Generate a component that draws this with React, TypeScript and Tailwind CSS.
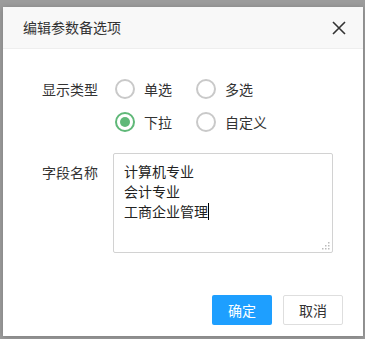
import React from "react";

const font = { fontFamily: '"Noto Sans CJK SC", "Noto Sans", sans-serif' };

type RadioProps = {
  label: string;
  checked?: boolean;
  className?: string;
};

const Radio = ({ label, checked, className }: RadioProps) => {
  return (
    <div className={`${className} flex items-center h-[20px]`}>
      {checked ? (
        <span className="w-[20px] h-[20px] rounded-full border-2 border-[#5fb878] flex items-center justify-center">
          <span className="w-[10px] h-[10px] rounded-full bg-[#5fb878]"></span>
        </span>
      ) : (
        <span className="w-[20px] h-[20px] rounded-full border-2 border-[#c9c9c9]"></span>
      )}
      <span className="ml-[9px] text-[14px] text-[#333]">{label}</span>
    </div>
  );
};

const App = () => {
  return (
    <div
      className="w-[365px] h-[339px] bg-[#9c9c9c] pt-[7px] pl-[3px] overflow-hidden"
      style={font}
    >
      <div className="w-[360px] h-[329px] bg-white flex flex-col shadow-[0_1px_6px_rgba(0,0,0,0.2)]">
        {/* title */}
        <div className="h-[42px] shrink-0 bg-[#f8f8f8] border-b border-[#eee] flex items-center justify-between pl-[20px] pr-[16px]">
          <span className="text-[14px] text-[#333]">编辑参数备选项</span>
          <svg width="14" height="14" viewBox="0 0 14 14" className="mr-[1px]">
            <path d="M1 1 L13 13 M13 1 L1 13" stroke="#333" strokeWidth="1.6" />
          </svg>
        </div>

        {/* body */}
        <div className="flex-1 pt-[30px]">
          <div className="flex">
            <div className="w-[95px] text-right text-[14px] text-[#333] leading-[20px]">
              显示类型
            </div>
            <div className="ml-[17px] grid grid-cols-[81px_auto] gap-y-[13px]">
              <Radio label="单选" />
              <Radio label="多选" />
              <Radio label="下拉" checked />
              <Radio label="自定义" />
            </div>
          </div>

          <div className="flex mt-[21px]">
            <div className="w-[95px] text-right text-[14px] text-[#333] leading-[20px] pt-[9px]">
              字段名称
            </div>
            <div className="ml-[15px] relative w-[220px] h-[100px] border border-[#d2d2d2] rounded-[2px] px-[10px] pt-[7px] text-[14px] text-[#222] leading-[20px]">
              <div>计算机专业</div>
              <div>会计专业</div>
              <div className="flex items-center">
                工商企业管理
                <span className="inline-block w-[1px] h-[17px] bg-black"></span>
              </div>
              <svg
                width="9"
                height="9"
                viewBox="0 0 9 9"
                className="absolute right-[2px] bottom-[2px]"
              >
                <rect x="7" y="1" width="1.5" height="1.5" fill="#bbb" />
                <rect x="4" y="4" width="1.5" height="1.5" fill="#bbb" />
                <rect x="7" y="4" width="1.5" height="1.5" fill="#bbb" />
                <rect x="1" y="7" width="1.5" height="1.5" fill="#bbb" />
                <rect x="4" y="7" width="1.5" height="1.5" fill="#bbb" />
                <rect x="7" y="7" width="1.5" height="1.5" fill="#bbb" />
              </svg>
            </div>
          </div>
        </div>

        {/* buttons */}
        <div className="flex justify-end gap-[11px] pr-[20px] pb-[11px]">
          <button className="w-[60px] h-[30px] bg-[#1e9fff] rounded-[2px] text-white text-[14px]">
            确定
          </button>
          <button className="w-[60px] h-[30px] bg-white border border-[#dedede] rounded-[2px] text-[#333] text-[14px]">
            取消
          </button>
        </div>
      </div>
    </div>
  );
};

export default App;
